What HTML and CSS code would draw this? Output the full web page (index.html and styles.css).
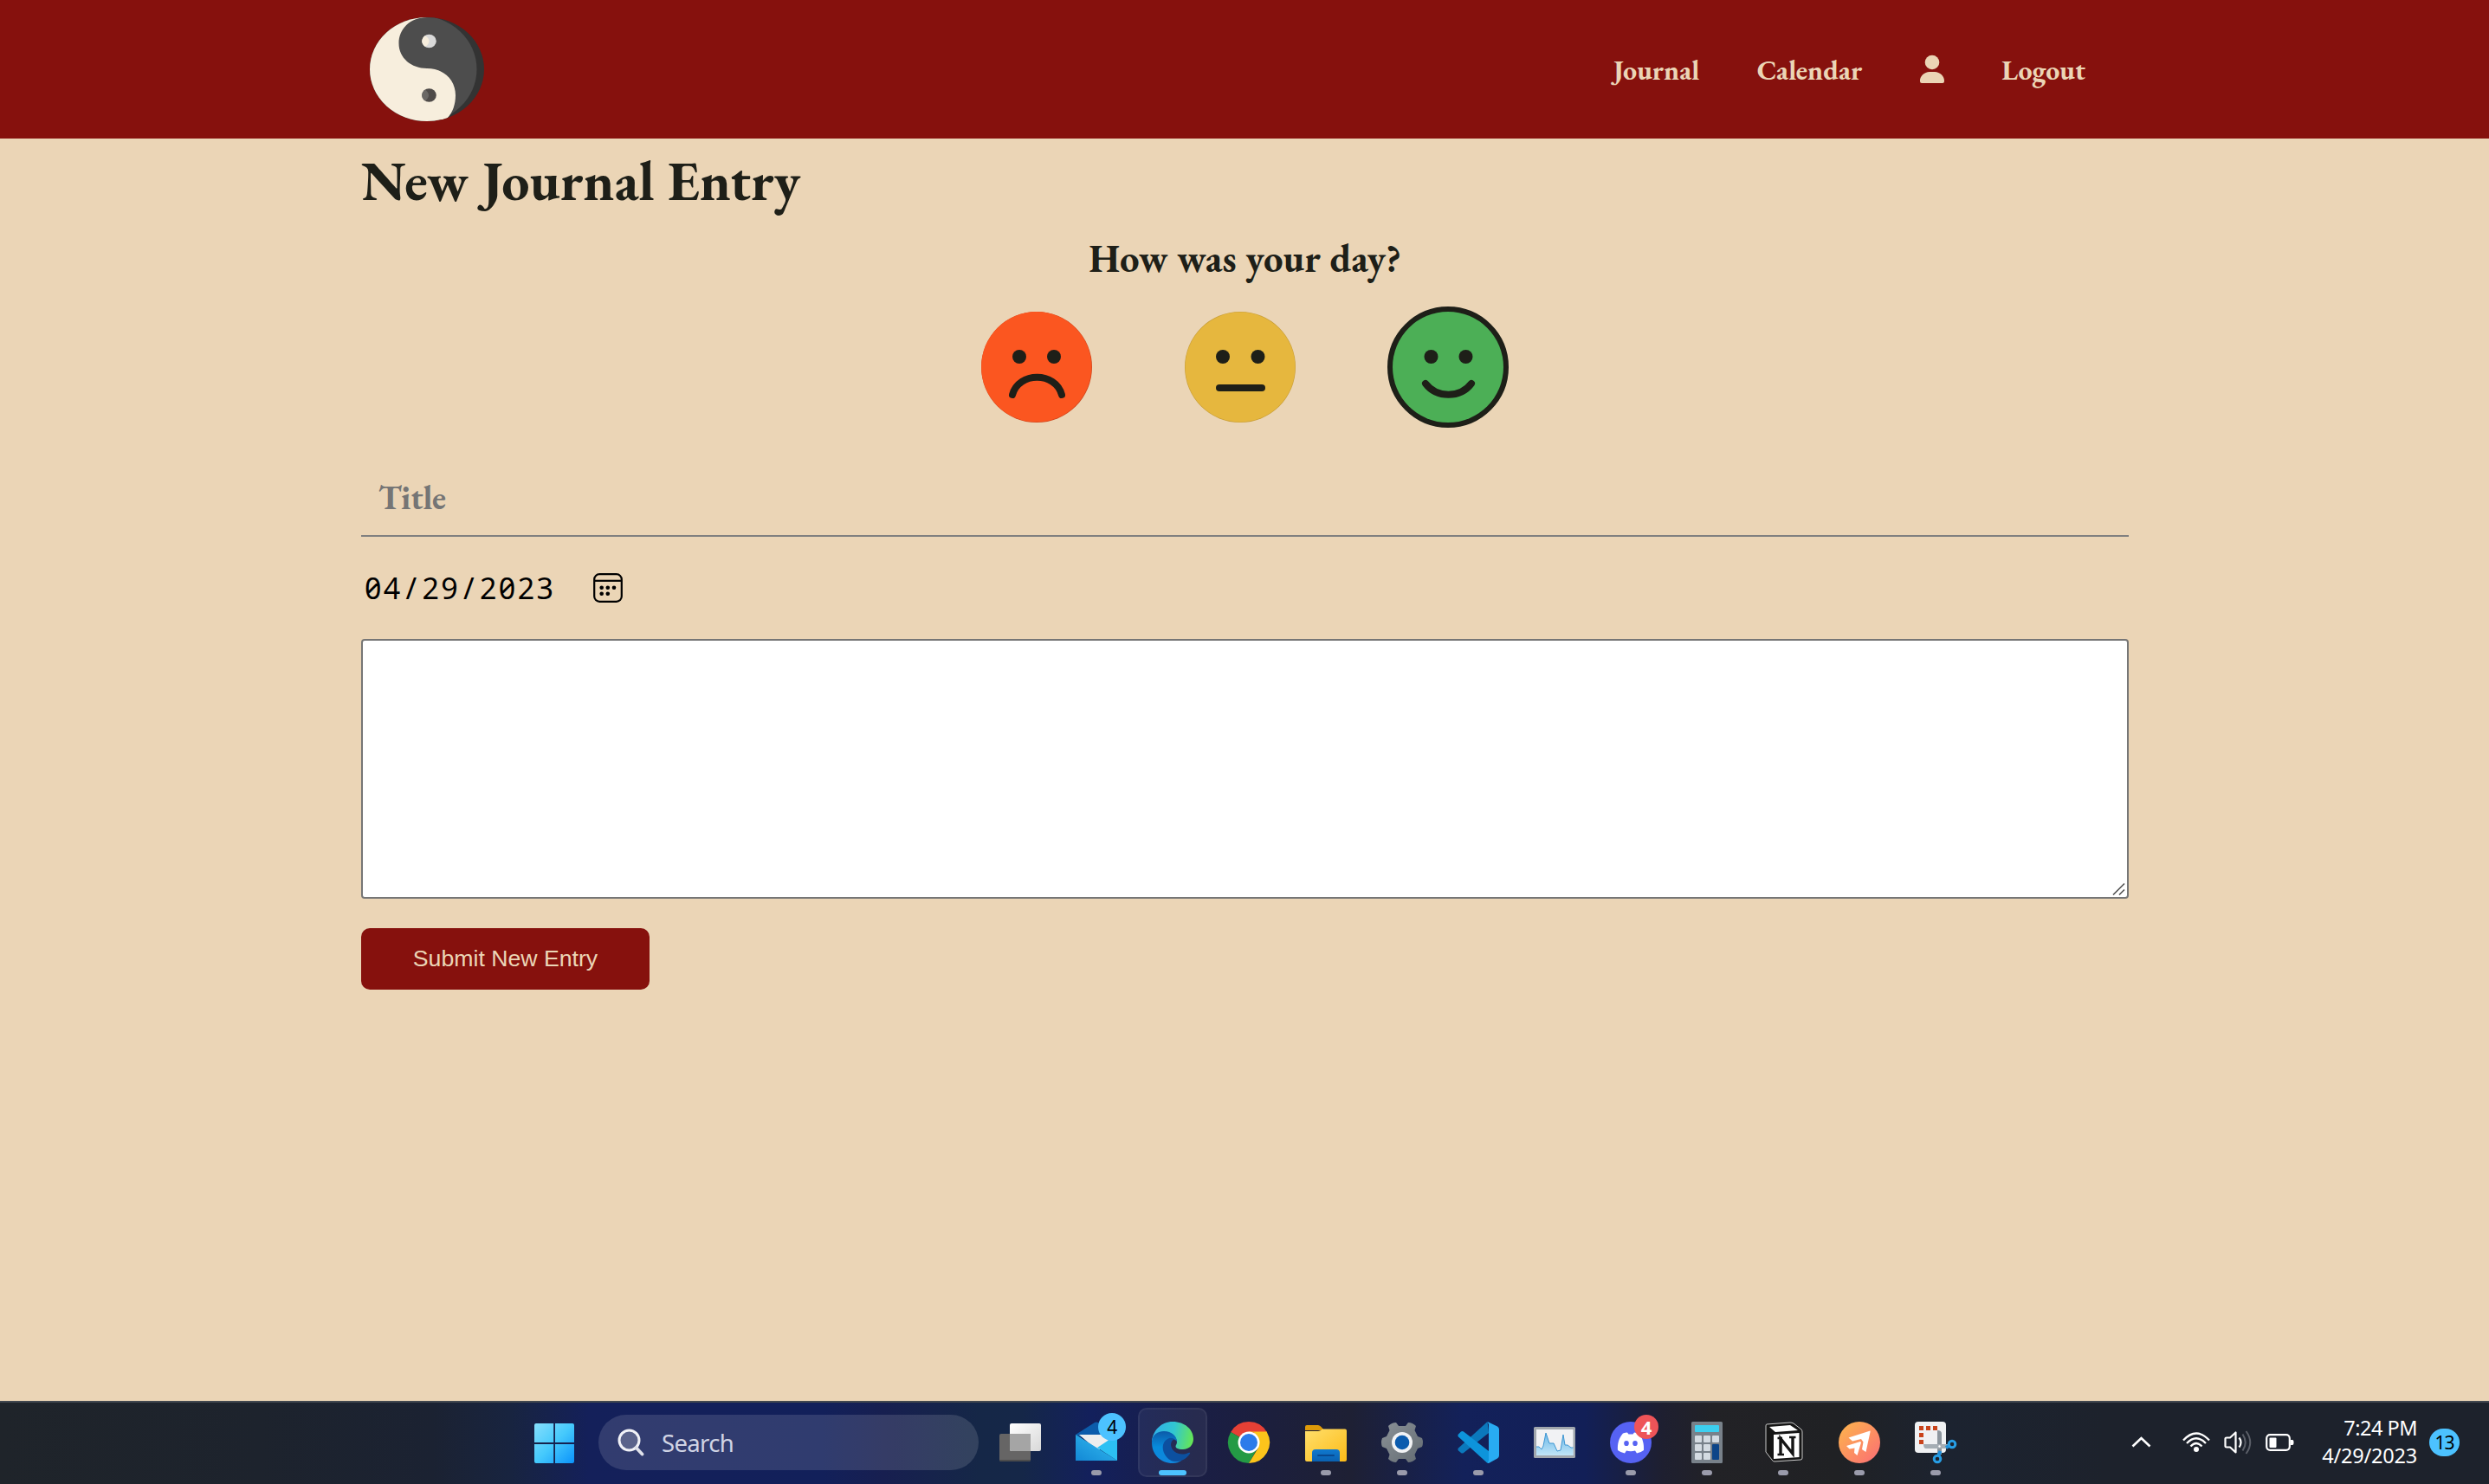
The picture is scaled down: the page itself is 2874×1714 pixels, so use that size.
FILE: index.html
```html
<!DOCTYPE html>
<html lang="en">
<head>
<meta charset="utf-8">
<title>New Journal Entry</title>
<link rel="stylesheet" href="styles.css">
</head>
<body>
<header class="site-header">
  <div class="container header-inner">
    <svg class="logo" viewBox="0 0 132 120" preserveAspectRatio="none">
      <defs><clipPath id="disc"><ellipse cx="66" cy="60" rx="66" ry="60"/></clipPath></defs>
      <g clip-path="url(#disc)">
        <rect width="132" height="120" fill="#333"/>
        <ellipse cx="57.500" cy="60" rx="66" ry="62" fill="#4d4d4d"/>
        <path d="M66 0C46 0 33.500 14 33.500 30C33.500 47 48 59 66 59C86 59 99 73 99 90C99 100 96 110 89 117L66 122H-5V-2Z" fill="#f7eedd"/>
      </g>
      <ellipse cx="68.500" cy="27.500" rx="8.300" ry="7.700" fill="#d9d9d9"/>
      <path d="M64 21Q73 27.500 64 34Q60.200 31 60.200 27.500Q60.200 24 64 21Z" fill="#f7eedd"/>
      <ellipse cx="68.500" cy="90" rx="8.300" ry="7.700" fill="#4f4b49"/>
      <path d="M64 83.500Q72 90 64 96.500Q60.200 94 60.200 90Q60.200 86 64 83.500Z" fill="#6b6865"/>
    </svg>
    <nav class="nav">
      <a>Journal</a>
      <a>Calendar</a>
      <svg class="user" viewBox="0 0 32 36"><ellipse cx="16" cy="10" rx="8.300" ry="8.300" fill="#ebd5b5"/><path d="M2 32C1.500 26 7 21 13 21H19C25 21 30.500 26 30 32Q30 34 28 34H4Q2 34 2 32Z" fill="#ebd5b5"/></svg>
      <a>Logout</a>
    </nav>
  </div>
</header>

<main class="container">
  <h1>New Journal Entry</h1>
  <h2>How was your day?</h2>
  <div class="moods">
    <div class="mood"><svg viewBox="0 0 128 128"><circle cx="64" cy="64" r="64" fill="#d0461d"/><circle cx="63.700" cy="63.700" r="63.600" fill="#fb5620"/><g fill="#1e1f18"><circle cx="44" cy="52" r="8"/><circle cx="84" cy="52" r="8"/></g><path class="mouth" d="M36 96C43 69 86 69 93 96"/></svg></div>
    <div class="mood"><svg viewBox="0 0 128 128"><circle cx="64" cy="64" r="64" fill="#c99f38"/><circle cx="64" cy="64" r="63.400" fill="#e6b73e"/><g fill="#1e1f18"><circle cx="44" cy="52" r="8"/><circle cx="84.500" cy="52" r="8"/></g><path class="mouth" d="M40 88H89"/></svg></div>
    <div class="mood selected"><svg viewBox="0 0 128 128"><circle cx="64" cy="64" r="64" fill="#4caf56"/><g fill="#1e1f18"><circle cx="44.500" cy="52" r="8"/><circle cx="84.500" cy="52" r="8"/></g><path class="mouth" d="M38 83C51 100 78 100 91 83"/></svg></div>
  </div>
  <input class="title-field" type="text" placeholder="Title">
  <div class="date-field">
    <span class="date">04<span class="sep">/</span>29<span class="sep">/</span>2023</span>
    <svg class="cal" viewBox="0 0 34 34"><rect x="1.200" y="1.200" width="31.600" height="31.600" rx="6" fill="none" stroke="#000" stroke-width="2.200"/><path d="M1 8.800H33" stroke="#000" stroke-width="2.200"/><g><circle cx="9.700" cy="16.800" r="2.300"/><circle cx="16.800" cy="16.800" r="2.300"/><circle cx="24" cy="16.800" r="2.300"/><circle cx="9.700" cy="23.800" r="2.300"/><circle cx="16.800" cy="23.800" r="2.300"/></g></svg>
  </div>
  <div class="entry">
    <textarea></textarea>
    <svg class="grip" viewBox="0 0 16 16"><path d="M1 14.500L14 1.500M8 14.500L14 8.500" stroke="#555" stroke-width="1.700"/></svg>
  </div>
  <button class="submit">Submit New Entry</button>
</main>

<footer class="taskbar">
  <div class="apps">
    <div class="app start"><svg viewBox="0 0 80 80"><defs><linearGradient id="win" x1="17" y1="18" x2="63" y2="64" gradientUnits="userSpaceOnUse"><stop offset="0" stop-color="#86dffc"/><stop offset=".5" stop-color="#45c9fc"/><stop offset="1" stop-color="#0b93fb"/></linearGradient></defs><path d="M19 18H39.200V40H17V20Q17 18 19 18ZM41 18H61Q63 18 63 20V40H41ZM17 42H39.200V64H19Q17 64 17 62ZM41 42H63V62Q63 64 61 64H41Z" fill="url(#win)"/></svg></div>
    <div class="search"><svg viewBox="0 0 32 32"><circle cx="13.500" cy="13.500" r="11.500" fill="#fff" fill-opacity=".2" stroke="#f1f2f7" stroke-width="3"/><path d="M21.500 22L28.500 29.500" stroke="#dfe1ea" stroke-width="3.800" stroke-linecap="round"/></svg><span>Search</span></div>

    <div class="app"><svg viewBox="0 0 80 80"><defs><linearGradient id="tv" x1="0" y1="0" x2="1" y2="1"><stop offset="0" stop-color="#fff"/><stop offset="1" stop-color="#d8d8d8"/></linearGradient></defs><rect x="16" y="30" width="36" height="32" rx="2" fill="#666565"/><path d="M16 60H52Q52 62 50 62H18Q16 62 16 60Z" fill="#4c4c4c"/><rect x="28" y="18" width="36" height="32" rx="2" fill="url(#tv)"/><path d="M28 30H52V50H30Q28 50 28 48Z" fill="#a5a5a5"/></svg></div>

    <div class="app"><svg viewBox="0 0 80 80"><defs><linearGradient id="ml" x1="0" y1="1" x2="1" y2="0"><stop offset="0" stop-color="#0f7fd0"/><stop offset="1" stop-color="#45d4fb"/></linearGradient></defs><path d="M16 31L38 17Q40 16 42 17L64 31L50 46Z" fill="#0c5cab"/><path d="M20 31H60L42 50Z" fill="#eee"/><path d="M16 31L64 61H16Z" fill="#1a99df"/><path d="M41 46L64 31V61Z" fill="#2cc0f3"/><path d="M16 31L64 61H16Z" fill="url(#ml)" opacity=".65"/></svg><span class="badge blue">4</span><i class="dot"></i></div>

    <div class="app active"><svg viewBox="0 0 80 80"><defs><linearGradient id="e1" x1="16" y1="28" x2="64" y2="38" gradientUnits="userSpaceOnUse"><stop offset="0" stop-color="#30afe9"/><stop offset=".5" stop-color="#31c6d1"/><stop offset="1" stop-color="#68e850"/></linearGradient><linearGradient id="e2" x1="0" y1="0" x2="0" y2="1"><stop offset="0" stop-color="#0c5aa8"/><stop offset=".5" stop-color="#078bdc"/><stop offset="1" stop-color="#1186dc"/></linearGradient></defs><path d="M16 39C17 26 27 16 40 16C54 16 64 25 64 36C64 43 59 48 52 48C46 48 42 46 44 43C47 38 43 33 38 30Q24 24 16 39Z" fill="url(#e1)"/><path d="M16 40C16 32 22 27 30 27C39 27 45 33 45 39C42 34 35 35 33 42C31 52 40 62 50 61Q46 64 40 64C26 64 16 54 16 40Z" fill="url(#e2)"/><path d="M36 35C28 38 27 47 31 54C36 63 45 63 50 61Q57 58 60 53Q61 51 58 52C50 56 39 52 38 43Q38 38 42 36Q39 34 36 35Z" fill="#0c50a0"/></svg><i class="dot on"></i></div>

    <div class="app"><svg viewBox="0 0 80 80"><path d="M40 40L19.200 28A24 24 0 0 1 60.800 28Z" fill="#e64035"/><path d="M19.200 28A24 24 0 0 0 40 64L50.400 46L40 40Z" fill="#249a45"/><path d="M60.800 28A24 24 0 0 1 40 64L51 46L46 28Z" fill="#fcc41b"/><path d="M40 28H60.800" stroke="#fcc41b" stroke-width="1"/><circle cx="40" cy="40" r="12.500" fill="#fff"/><circle cx="40" cy="40" r="10" fill="#2d7bea"/></svg></div>

    <div class="app"><svg viewBox="0 0 80 80"><defs><linearGradient id="fo" x1="0" y1="0" x2="1" y2="1"><stop offset="0" stop-color="#ffdf6b"/><stop offset="1" stop-color="#fcbb18"/></linearGradient><linearGradient id="fb" x1="0" y1="0" x2="0" y2="1"><stop offset="0" stop-color="#0f79cf"/><stop offset="1" stop-color="#0a61b1"/></linearGradient></defs><path d="M16 22Q16 20 18 20H31Q33 20 35 22.500L38 26H16Z" fill="#de9a09"/><path d="M16 27H31Q34 27 36 24.500H62Q64 24.500 64 26.500V60Q64 62 62 62H18Q16 62 16 60Z" fill="url(#fo)"/><path d="M24 62V52Q24 48 28 48H52Q56 48 56 52V62Z" fill="url(#fb)"/><path d="M31 55H49" stroke="#08488f" stroke-width="2" stroke-linecap="round"/></svg><i class="dot"></i></div>

    <div class="app"><svg viewBox="0 0 80 80"><defs><linearGradient id="ge" x1="0" y1="0" x2="1" y2="1"><stop offset="0" stop-color="#8b9297"/><stop offset="1" stop-color="#636b72"/></linearGradient></defs><path d="M33 17L36 21H44L47 17Q52 17 56 21L54.500 26L58 33L63 35Q65 40 63 45L58 47L54.500 54L56 59Q52 63 47 63L44 59H36L33 63Q28 63 24 59L25.500 54L22 47L17 45Q15 40 17 35L22 33L25.500 26L24 21Q28 17 33 17Z" fill="url(#ge)"/><circle cx="40" cy="40" r="12" fill="#f2f3f5"/><circle cx="40" cy="40" r="8.300" fill="#0c5cae"/></svg><i class="dot"></i></div>

    <div class="app"><svg viewBox="0 0 80 80"><path d="M50.500 16L17 46.500Q15.500 48 17 49.500L20 52Q21.500 53 23 52L52 29Z" fill="#0b78bc"/><path d="M17 33.500Q15.500 32 17 30.500L20 27.500Q21.500 26.500 23 27.500L52 50V64L50 63.500Z" fill="#0d94db"/><path d="M50.500 16L62 21.500Q64 22.500 64 25V55Q64 57.500 62 58.500L52 64L50.500 63.500L52 61V19Z" fill="#28abf2"/></svg><i class="dot"></i></div>

    <div class="app"><svg viewBox="0 0 80 80"><defs><linearGradient id="pm" x1="0" y1="0" x2="0" y2="1"><stop offset="0" stop-color="#69b8e8"/><stop offset="1" stop-color="#c1e5f7"/></linearGradient></defs><rect x="16" y="22" width="48" height="36" rx="1.500" fill="#a1a7ad"/><rect x="19" y="25" width="42.500" height="30" fill="#f1f2f4"/><path d="M19 45H22L25 48L27 44L30 29L34 41H39L43 50L47 49L50 31L52 43L55 43L59 46L61.500 46V55H19Z" fill="url(#pm)"/><path d="M19 45H22L25 48L27 44L30 29L34 41H39L43 50L47 49L50 31L52 43L55 43L59 46L61.500 46" fill="none" stroke="#3e96d2" stroke-width="1"/></svg></div>

    <div class="app"><svg viewBox="0 0 80 80"><circle cx="40" cy="40" r="24" fill="#5662f3"/><path d="M31 29.500Q34 28.500 36 28.500L37.500 30.500H42.500L44 28.500Q47 28.500 50 30C54 36 55.500 42 55 49Q51 52 47 52.500L45 49.500Q40 51 35 49.500L33 52.500Q29 52 25 49C24.500 42 26 35 31 29.500Z" fill="#fff"/><ellipse cx="35" cy="41" rx="2.800" ry="3.100" fill="#5662f3"/><ellipse cx="45" cy="41" rx="2.800" ry="3.100" fill="#5662f3"/></svg><span class="badge red">4</span><i class="dot"></i></div>

    <div class="app"><svg viewBox="0 0 80 80"><rect x="22" y="16" width="36" height="48" rx="1.500" fill="#78818a"/><rect x="26" y="20" width="28" height="8" rx="1" fill="#3ccff0"/><g fill="#d4dbe2"><rect x="26" y="32" width="8" height="8" rx="1"/><rect x="36" y="32" width="8" height="8" rx="1"/><rect x="46" y="32" width="8" height="8" rx="1"/><rect x="26" y="42" width="8" height="8" rx="1"/><rect x="36" y="42" width="8" height="8" rx="1"/><rect x="26" y="52" width="8" height="8" rx="1"/><rect x="36" y="52" width="8" height="8" rx="1"/></g><rect x="46" y="42" width="8" height="18" rx="1" fill="#0d4588"/></svg><i class="dot"></i></div>

    <div class="app"><svg viewBox="0 0 80 80"><path d="M21 19L48 17Q50 17 52 18L61 25Q62 26 62 28V58Q62 60 60 60L30 62Q28 62 27 60L20 51V21Q20 19 21 19Z" fill="#151515" stroke="#c8c8c8" stroke-width="1"/><path d="M24 22L48 20L57 26L31 28Z" fill="#fff"/><path d="M29 31L58.500 29V57L29 59Z" fill="#fff"/><path d="M37 53V35.500L51 53V34" stroke="#151515" stroke-width="3.400" fill="none"/><path d="M33.500 35H39M47 34H54.500M33.500 54H41" stroke="#151515" stroke-width="2.400"/></svg><i class="dot"></i></div>

    <div class="app"><svg viewBox="0 0 80 80"><defs><linearGradient id="pp" x1="0" y1="0" x2="1" y2="1"><stop offset="0" stop-color="#fdb64b"/><stop offset="1" stop-color="#fb6d75"/></linearGradient></defs><circle cx="40" cy="40" r="24" fill="url(#pp)"/><path d="M52.500 26.500L27.500 34.500L32 38.500L42 36L44.500 39.500L43 48L47.500 51L52.500 28Z" fill="#fff"/><path d="M41 39L25 44L28.500 47.500L34.500 46.500L34 52L37.500 55L42 40Z" fill="#fff"/></svg><i class="dot"></i></div>

    <div class="app"><svg viewBox="0 0 80 80"><rect x="16" y="16" width="36" height="36" rx="4" fill="#f0f1f3"/><g fill="#c9431b"><rect x="21" y="21" width="5" height="5"/><rect x="29" y="21" width="5" height="5"/><rect x="37" y="21" width="5" height="5"/><rect x="21" y="29" width="5" height="5"/><rect x="21" y="37" width="5" height="5"/></g><path d="M42 26Q47 26 47 30V54H42Z" fill="#8d969e"/><path d="M26 42H54V47H29Q26 47 26 42Z" fill="#a5adb4"/><circle cx="44.500" cy="44.500" r="1.200" fill="#fff"/><path d="M52 46L57 43M45.500 50L43 56" stroke="#1e8fdb" stroke-width="4"/><circle cx="59" cy="42" r="3.800" fill="none" stroke="#279ee5" stroke-width="3"/><circle cx="42" cy="59" r="3.800" fill="none" stroke="#279ee5" stroke-width="3"/></svg><i class="dot"></i></div>
  </div>

  <div class="tray">
    <svg class="chev" viewBox="0 0 24 16"><path d="M2.500 12.500L12.500 3L22.500 12.500" fill="none" stroke="#fff" stroke-width="2.600"/></svg>
    <svg class="wifi" viewBox="0 0 32 26"><g fill="none" stroke="#fff" stroke-width="2.300"><path d="M1 10.500Q16 -5.500 31 10.500"/><path d="M5 14Q16 2.500 27 14"/><path d="M9.500 17.500Q16 10.500 22.500 17.500"/></g><circle cx="16" cy="21" r="3" fill="#fff"/></svg>
    <svg class="vol" viewBox="0 0 34 30"><path d="M1.500 10.500Q1.500 9.500 3 9.500H7L13.500 3.500V26.500L7 20.500H3Q1.500 20.500 1.500 19.500Z" fill="none" stroke="#fff" stroke-width="2.200" stroke-linejoin="round"/><path d="M17.500 9.500Q21.500 15 17.500 20.500" fill="none" stroke="#fff" stroke-width="2.200"/><path d="M21.500 5.500Q28 15 21.500 24.500M25.500 2Q35 15 25.500 28" fill="none" stroke="#5b5f68" stroke-width="2"/></svg>
    <svg class="bat" viewBox="0 0 34 20"><rect x="1.200" y="1.200" width="26.600" height="17.600" rx="4" fill="none" stroke="#fff" stroke-width="2.200"/><rect x="4.500" y="4.500" width="8" height="11.500" rx="1" fill="#fff"/><path d="M29 7H31Q32.500 7 32.500 10T31 13H29Z" fill="#fff"/></svg>
    <div class="clock"><span class="time">7:24 PM</span><span class="day">4/29/2023</span></div>
    <span class="count">13</span>
  </div>
</footer>
</body>
</html>
```
FILE: styles.css
```css
* { box-sizing: border-box; }
body {
  margin: 0;
  height: 1714px;
  overflow: hidden;
  display: flex;
  flex-direction: column;
  background: #ebd5b6;
  color: #1e1f18;
  font-family: "EB Garamond", "Liberation Serif", serif;
}
svg { display: block; }
.container { width: 2041px; margin: 0 auto 0 417px; }

.site-header { height: 160px; background: #86110d; }
.header-inner { height: 160px; display: flex; justify-content: space-between; align-items: center; padding: 0 50px 0 10px; }
.logo { width: 132px; height: 120px; }
.nav { display: flex; align-items: center; gap: 66.5px; color: #ebd5b6; font-size: 32px; font-weight: 700; line-height: 40px; }
.nav a { padding-top: 2px; }
.user { width: 32px; height: 36px; margin: 0 -2px; }

main { flex: 1; padding-top: 9px; }
h1 { margin: 0; font-size: 64px; line-height: 80px; }
h2 { margin: 19px 0 26px; text-align: center; font-size: 44.8px; line-height: 60px; }
.moods { display: flex; justify-content: center; align-items: center; gap: 106.5px; height: 140px; }
.mood svg { width: 128px; height: 128px; }
.mood.selected { border: 6px solid #1e1f18; border-radius: 50%; background: #1e1f18; }
.mouth { fill: none; stroke: #1e1f18; stroke-width: 8; stroke-linecap: round; }

.title-field {
  display: block;
  width: 100%;
  height: 81px;
  margin-top: 45px;
  padding: 10px 20px 19px;
  border: 0;
  border-bottom: 2px solid #808080;
  background: transparent;
  font: 700 38.4px/50px "EB Garamond", "Liberation Serif", serif;
}
.title-field::placeholder { color: #757575; opacity: 1; }
.date-field { display: flex; align-items: center; height: 118px; padding-left: 4px; color: #000; }
.date { width: 264px; font: 400 34px/50px "Noto Sans", sans-serif; font-feature-settings: "zero"; letter-spacing: 2.4px; }
.sep { display: inline-block; width: 22.8px; text-align: center; }
.cal { width: 34px; height: 34px; }
.entry { position: relative; height: 300px; }
.entry textarea { display: block; width: 100%; height: 100%; border: 2px solid #767676; border-radius: 4px; background: #fff; resize: none; }
.grip { position: absolute; right: 3px; bottom: 3px; width: 16px; height: 16px; }
.submit { display: block; width: 333px; height: 71px; margin-top: 34px; border: 0; border-radius: 10px; background: #86110d; color: #ebd5b6; font: 400 26.67px "Liberation Sans", Arial, sans-serif; }

.taskbar {
  height: 96px;
  display: flex;
  justify-content: space-between;
  border-top: 2px solid #41474f;
  padding: 6px 34px 0 600px;
  background: linear-gradient(90deg, #1f242a 0, #1d232d 300px, #1b2232 500px, #182440 590px, #14205a 680px, #12205a 950px, #171f50 1020px, #152747 1130px, #152748 1180px, #13205c 1260px, #1a1e45 1380px, #1e2034 1560px, #13215a 1690px, #121f57 1830px, #1e1f30 1920px, #222226 1980px, #202124 2120px, #1c2330 2250px, #1d222c 2430px);
  color: #fff;
  font-family: "Segoe UI", "Noto Sans", sans-serif;
}
.apps { display: flex; gap: 8.1px; }
.app { position: relative; width: 80px; height: 80px; border-radius: 10px; }
.app svg { width: 80px; height: 80px; }
.app.active { background: rgba(255, 255, 255, .06); box-shadow: inset 0 0 0 2px rgba(255, 255, 255, .06); }
.search { width: 439px; height: 64px; margin: 8px 0 0 3px; padding: 0 22px; display: flex; align-items: center; border-radius: 32px; background: rgba(255, 255, 255, .13); font-size: 27.5px; color: #d0d4e4; }
.search svg { width: 32px; height: 32px; }
.search span { margin-left: 19px; padding-top: 1px; letter-spacing: -.7px; line-height: 40px; }
.dot { position: absolute; left: 34px; top: 72px; width: 12px; height: 6px; border-radius: 3px; background: #9a9bab; }
.dot.on { left: 24px; width: 32px; background: #4cc2ff; }
.badge { position: absolute; text-align: center; border-radius: 50%; }
.blue { left: 42px; top: 6px; width: 32px; height: 32px; background: #4cc2ff; color: #000; font-size: 21px; line-height: 33px; }
.red { left: 44px; top: 8px; width: 28px; height: 28px; background: #ee5458; color: #fff; font: 700 22px/29px "Open Sans", sans-serif; }

.tray { display: flex; align-items: center; height: 80px; }
.chev { width: 24px; height: 16px; margin-right: 36px; }
.wifi { width: 32px; height: 26px; margin-right: 16px; }
.vol { width: 34px; height: 30px; margin-right: 14px; }
.bat { width: 34px; height: 20px; }
.clock { width: 141px; display: flex; flex-direction: column; align-items: flex-end; font-size: 23.5px; line-height: 32px; padding-bottom: 2px; }
.time { letter-spacing: -.5px; }
.day { letter-spacing: -.2px; }
.count { width: 35px; height: 32px; margin-left: 14px; border-radius: 16px; background: #4cc2ff; color: #000; text-align: center; font-size: 21px; line-height: 32px; letter-spacing: -1px; }
```
